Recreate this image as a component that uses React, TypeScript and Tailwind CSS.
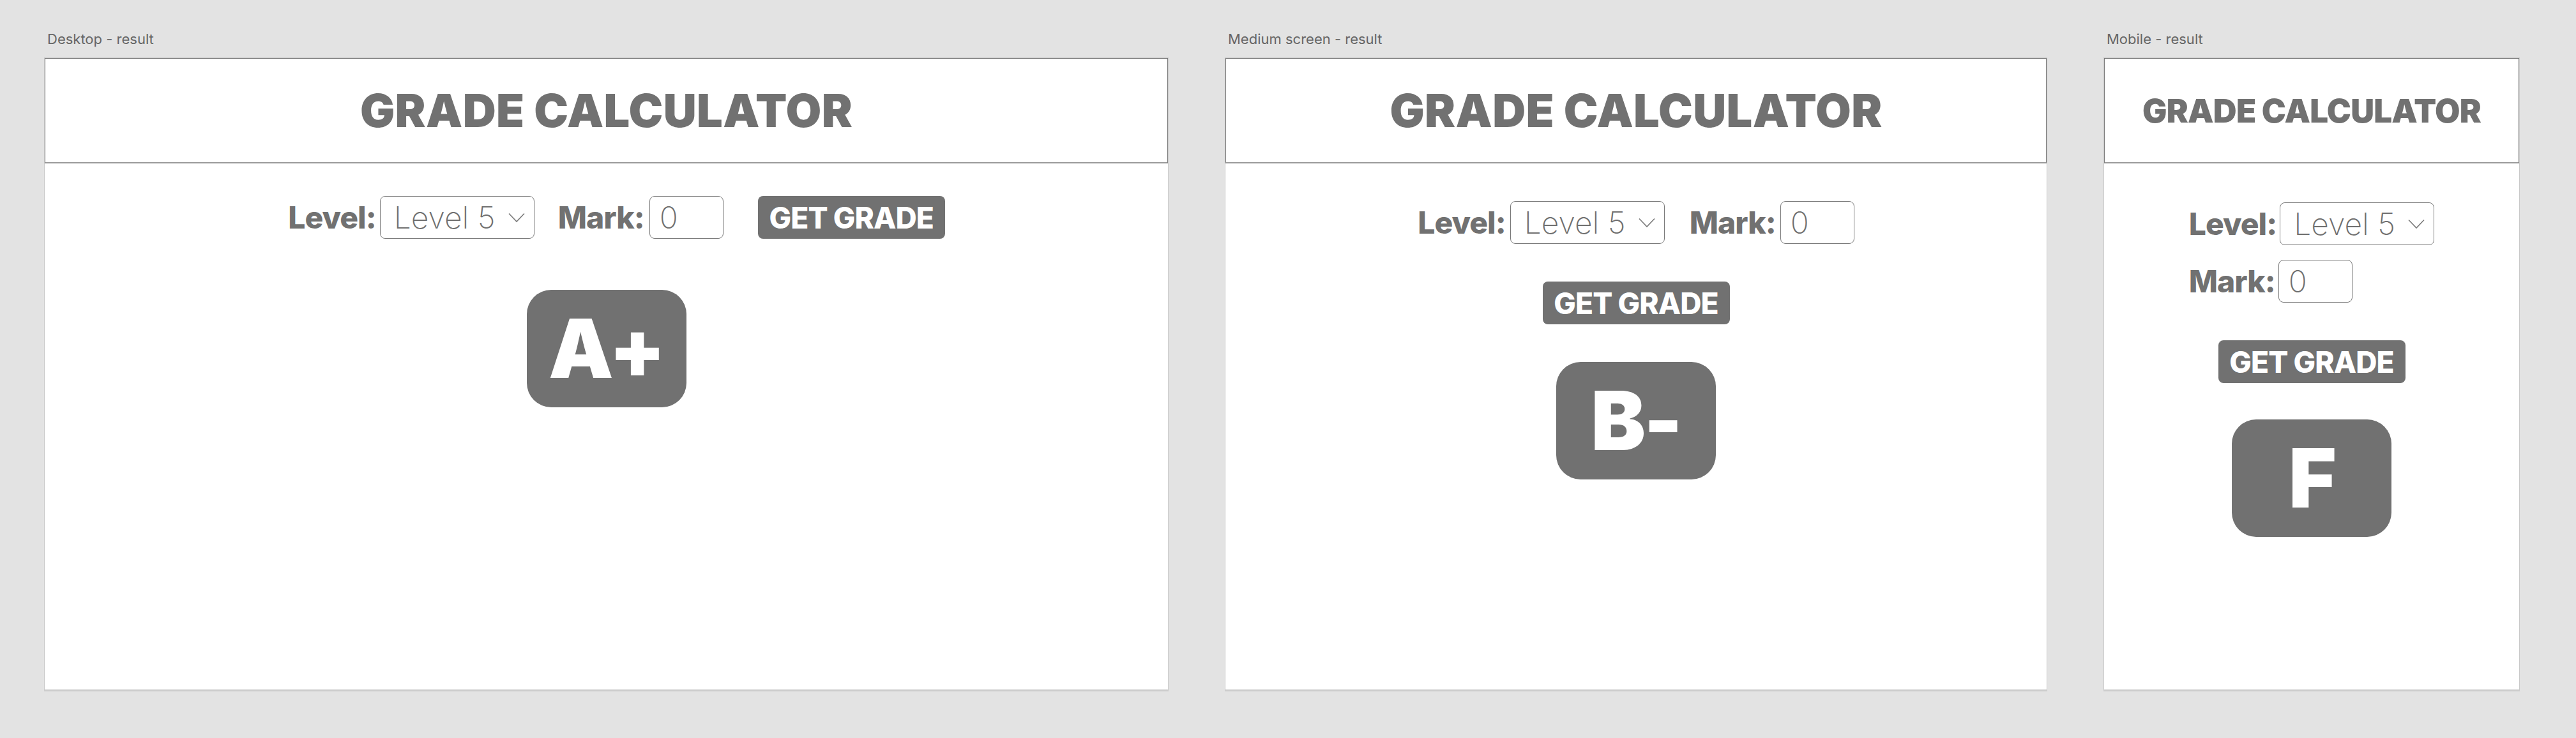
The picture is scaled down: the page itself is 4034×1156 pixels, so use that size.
const font = "font-['Inter','Liberation_Sans',sans-serif]";

function Chevron() {
  return (
    <svg width="26" height="16" viewBox="0 0 26 16" fill="none" stroke="#7a7a7a" strokeWidth="1.6">
      <path d="M1 1.5 L13 14 L25 1.5" />
    </svg>
  );
}

function LevelSelect() {
  return (
    <div className="flex h-[67px] w-[242px] items-center justify-between rounded-[8px] border border-[#7a7a7a] pl-[21px] pr-[14px]">
      <span className="text-[48px] font-extralight leading-none text-[#6f6f6f]">Level 5</span>
      <Chevron />
    </div>
  );
}

function MarkInput() {
  return (
    <input
      readOnly
      value="0"
      className="h-[67px] w-[116px] rounded-[8px] border border-[#7a7a7a] pl-[15px] text-[48px] font-extralight text-[#6f6f6f] outline-none"
    />
  );
}

function Label({ children }: { children: string }) {
  return <span className="text-[48px] font-extrabold leading-none tracking-[-0.02em] text-[#717171]">{children}</span>;
}

function GetGrade() {
  return (
    <button className="h-[67px] w-[293px] rounded-[8px] bg-[#717171] text-[46px] font-extrabold leading-none tracking-[-0.02em] text-white">
      GET GRADE
    </button>
  );
}

function Grade({ value }: { value: string }) {
  return (
    <div className="flex h-[184px] w-[250px] items-center justify-center rounded-[38px] bg-[#717171] text-[128px] font-black leading-none tracking-[-0.02em] text-white">
      {value}
    </div>
  );
}

function Caption({ children }: { children: string }) {
  return <div className="mb-[16px] pl-[5px] text-[22px] leading-[26px] text-[#666666]">{children}</div>;
}

export default function App() {
  return (
    <div className={`flex h-[1156px] w-[4034px] gap-[88px] bg-[#e3e3e3] pl-[69px] pt-[48px] ${font}`}>
      {/* desktop */}
      <div className="flex flex-col">
        <Caption>Desktop - result</Caption>
        <div className="flex h-[991px] w-[1761px] flex-col border border-[#c9c9c9] bg-white shadow-[0_2px_0_#cccccc]">
          <header className="flex h-[165px] items-center justify-center border border-b-2 border-[#7b7b7b] border-b-[#9a9a9a]">
            <h1 className="text-[72px] font-black leading-none tracking-[0.005em] text-[#717171]">GRADE CALCULATOR</h1>
          </header>
          <div className="flex flex-col items-center pt-[51px]">
            <div className="flex items-center pl-[32px]">
              <Label>Level:</Label>
              <div className="ml-[6px]"><LevelSelect /></div>
              <div className="ml-[37px]"><Label>Mark:</Label></div>
              <div className="ml-[8px]"><MarkInput /></div>
              <div className="ml-[54px]"><GetGrade /></div>
            </div>
            <div className="mt-[80px]"><Grade value="A+" /></div>
          </div>
        </div>
      </div>

      {/* medium */}
      <div className="flex flex-col">
        <Caption>Medium screen - result</Caption>
        <div className="flex h-[991px] w-[1288px] flex-col border border-[#c9c9c9] bg-white shadow-[0_2px_0_#cccccc]">
          <header className="flex h-[165px] items-center justify-center border border-b-2 border-[#7b7b7b] border-b-[#9a9a9a]">
            <h1 className="text-[72px] font-black leading-none tracking-[0.005em] text-[#717171]">GRADE CALCULATOR</h1>
          </header>
          <div className="flex flex-col items-center pt-[59px]">
            <div className="flex items-center">
              <Label>Level:</Label>
              <div className="ml-[7px]"><LevelSelect /></div>
              <div className="ml-[39px]"><Label>Mark:</Label></div>
              <div className="ml-[7px]"><MarkInput /></div>
            </div>
            <div className="mt-[59px]"><GetGrade /></div>
            <div className="mt-[59px]"><Grade value="B-" /></div>
          </div>
        </div>
      </div>

      {/* mobile */}
      <div className="flex flex-col">
        <Caption>Mobile - result</Caption>
        <div className="flex h-[991px] w-[652px] flex-col border border-[#c9c9c9] bg-white shadow-[0_2px_0_#cccccc]">
          <header className="flex h-[165px] items-center justify-center border border-b-2 border-[#7b7b7b] border-b-[#9a9a9a]">
            <h1 className="text-[51px] font-black leading-none tracking-[-0.015em] text-[#717171]">GRADE CALCULATOR</h1>
          </header>
          <div className="flex flex-col items-center pt-[61px]">
            <div className="flex flex-col items-start gap-[23px]">
              <div className="flex items-center">
                <Label>Level:</Label>
                <div className="ml-[5px]"><LevelSelect /></div>
              </div>
              <div className="flex items-center">
                <Label>Mark:</Label>
                <div className="ml-[5px]"><MarkInput /></div>
              </div>
            </div>
            <div className="mt-[59px]"><GetGrade /></div>
            <div className="mt-[57px]"><Grade value="F" /></div>
          </div>
        </div>
      </div>
    </div>
  );
}
